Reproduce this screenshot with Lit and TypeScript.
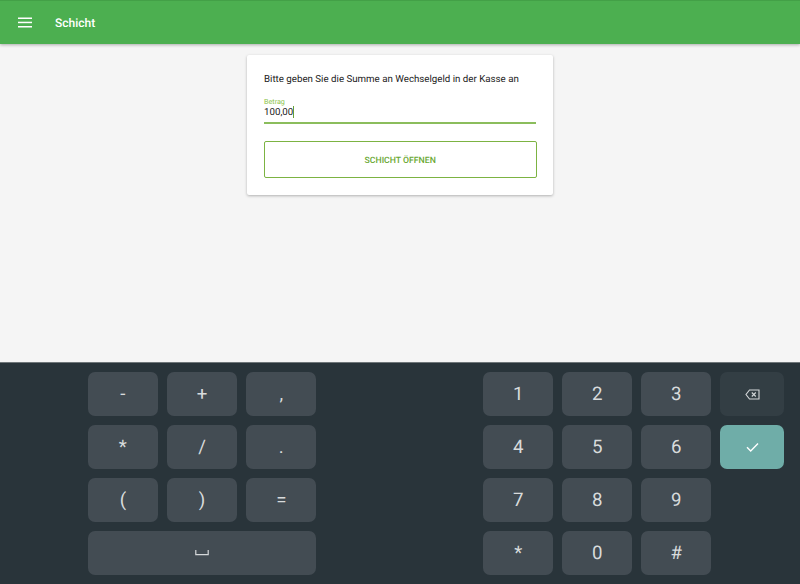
import { LitElement, html, css } from "lit";
import { customElement } from "lit/decorators.js";

const rowsL = [["-", "+", ","], ["*", "/", "."], ["(", ")", "="]];
const rowsR = ["1", "2", "3", "4", "5", "6", "7", "8", "9", "*", "0", "#"];

@customElement("app-root")
export class AppRoot extends LitElement {
  static styles = css`
    :host { display: block; width: 800px; height: 584px; overflow: hidden; font-family: Roboto, sans-serif; text-rendering: geometricPrecision; }
    .app { display: flex; flex-direction: column; height: 584px; background: #f5f5f5; }
    .bar { height: 44px; flex: none; box-sizing: border-box; border-top: 1px solid #43a047; background: #4caf50; color: #fff; display: flex; align-items: center; padding-left: 18px; gap: 23px; box-shadow: 0 1px 3px rgba(0,0,0,.3); position: relative; }
    .bar svg { display: block; }
    .title { font-size: 12px; font-weight: 500; }
    .main { flex: 1; display: flex; justify-content: center; align-items: flex-start; padding-top: 11px; }
    .card { width: 306px; height: 140px; box-sizing: border-box; background: #fff; border-radius: 2px; box-shadow: 0 1px 3px rgba(0,0,0,.28); padding: 18px 17px 17px 17px; display: flex; flex-direction: column; }
    .msg { font-size: 9.72px; line-height: 14px; color: #212121; white-space: nowrap; }
    .label { margin-top: 9.5px; font-size: 7.2px; line-height: 9px; color: #8bc34a; }
    .value { font-size: 9.72px; line-height: 13px; color: #212121; display: flex; align-items: center; height: 14px; }
    .caret { width: 1px; height: 12px; background: #689f38; }
    .line { height: 2px; margin-top: 2.5px; background: #8bbd5c; width: 272px; }
    .btn { margin: 17px 0 0 -0.5px; height: 38.5px; width: 273.4px; box-sizing: border-box; border: 1px solid #7cb342; border-radius: 2px; display: flex; align-items: center; justify-content: center; padding-top: 2.5px; font-size: 8.7px; font-weight: 500; color: #6aa832; }
    .kb { height: 222px; flex: none; box-sizing: border-box; background: #29343a; border-top: 1px solid #6f7679; padding: 9.4px 0 0 87.7px; display: flex; }
    .left { width: 229px; display: grid; grid-template-columns: repeat(3, 70.4px); grid-auto-rows: 44px; column-gap: 8.8px; row-gap: 8.8px; }
    .right { margin-left: 166.6px; width: 301px; display: grid; grid-template-columns: repeat(3, 70.2px) 64px; grid-auto-rows: 44px; column-gap: 8.8px; row-gap: 8.8px; }
    .key { background: #434c53; border-radius: 7px; color: #d8dbdc; display: flex; align-items: center; justify-content: center; font-size: 18.7px; }
    .wide { grid-column: 1 / span 3; }
    .dark { background: #333e44; }
    .ok { background: #6fada8; }
    .empty { visibility: hidden; }
  `;
  render() {
    return html`<div class="app">
      <div class="bar">
        <svg width="14" height="11" viewBox="0 0 14 11" fill="#fff"><rect y="0.5" width="14" height="1.5"/><rect y="4.7" width="14" height="1.5"/><rect y="9" width="14" height="1.5"/></svg>
        <span class="title">Schicht</span>
      </div>
      <div class="main">
        <div class="card">
          <div class="msg">Bitte geben Sie die Summe an Wechselgeld in der Kasse an</div>
          <div class="label">Betrag</div>
          <div class="value">100,00<span class="caret"></span></div>
          <div class="line"></div>
          <div class="btn">SCHICHT ÖFFNEN</div>
        </div>
      </div>
      <div class="kb">
        <div class="left">
          ${rowsL.flat().map((k) => html`<div class="key">${k}</div>`)}
          <div class="key wide"><svg width="14" height="6" viewBox="0 0 14 6" fill="none" stroke="#d5d8da" stroke-width="1.2"><path d="M.8 0v4.6h12.4V0"/></svg></div>
        </div>
        <div class="right">
          ${rowsR.slice(0, 3).map((k) => html`<div class="key">${k}</div>`)}
          <div class="key dark"><svg width="15" height="11" viewBox="0 0 15 11" fill="none" stroke="#d5d8da" stroke-width="1.1"><path d="M4.5 1H14v9H4.5L1 5.5z"/><path d="M6.8 3.5l4 4M10.8 3.5l-4 4"/></svg></div>
          ${rowsR.slice(3, 6).map((k) => html`<div class="key">${k}</div>`)}
          <div class="key ok"><svg width="13" height="10" viewBox="0 0 13 10" fill="none" stroke="#fff" stroke-width="1.4"><path d="M1 5.2l3.7 3.7L12 1.4"/></svg></div>
          ${rowsR.slice(6, 9).map((k) => html`<div class="key">${k}</div>`)}
          <div class="empty"></div>
          ${rowsR.slice(9).map((k) => html`<div class="key">${k}</div>`)}
        </div>
      </div>
    </div>`;
  }
}
